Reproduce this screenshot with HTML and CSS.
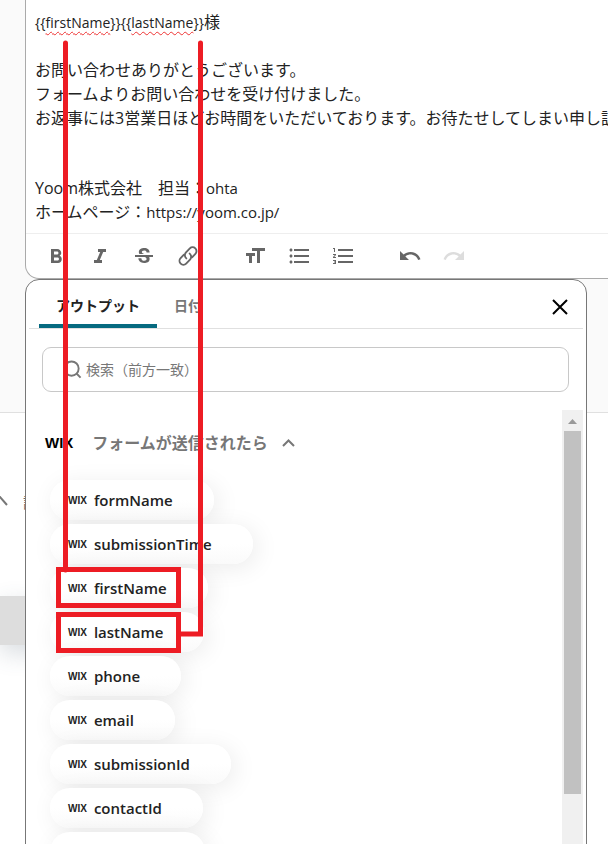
FILE: index.html
```html
<!DOCTYPE html>
<html lang="ja">
<head>
    <meta charset="UTF-8">
    <meta name="viewport" content="width=device-width, initial-scale=1.0">
    <title>メール本文</title>
    <link rel="stylesheet" href="styles.css">
</head>
<body>
    <div class="form-area">
        <div class="editor">
            <div class="editor-text" contenteditable="true" spellcheck="false">
                <p><span class="variable">{{<span class="misspelled">firstName</span>}}{{<span class="misspelled">lastName</span>}}</span>様</p>
                <p>お問い合わせありがとうございます。<br>フォームよりお問い合わせを受け付けました。<br>お返事には3営業日ほどお時間をいただいております。お待たせしてしまい申し訳</p>
                <p class="signature">Yoom株式会社　担当：<span class="latin">ohta</span><br>ホームページ：<span class="latin">https://yoom.co.jp/</span></p>
            </div>
            <div class="toolbar">
                <div class="tool-group">
                    <button type="button" aria-label="太字"><svg viewBox="0 0 24 24"><path d="M15.6 11.79c.97-.67 1.65-1.77 1.65-2.79 0-2.26-1.75-4-4-4H7v14h7.04c2.09 0 3.71-1.7 3.71-3.79 0-1.52-.86-2.82-2.15-3.42zM10 7.5h3c.83 0 1.5.67 1.5 1.5s-.67 1.5-1.5 1.5h-3v-3zm3.5 9H10v-3h3.5c.83 0 1.5.67 1.5 1.5s-.67 1.5-1.5 1.5z"/></svg></button>
                    <button type="button" aria-label="斜体"><svg viewBox="0 0 24 24"><path d="M10 5v3h2.21l-3.42 8H6v3h8v-3h-2.21l3.42-8H18V5z"/></svg></button>
                    <button type="button" aria-label="取り消し線"><svg viewBox="0 -1 24 24"><path d="M6.85 7.08C6.85 4.37 9.45 3 12.24 3c1.64 0 3 .49 3.9 1.28.77.65 1.46 1.73 1.46 3.24h-3.01c0-.31-.05-.59-.15-.85-.29-.86-1.2-1.28-2.25-1.28-1.86 0-2.34 1.02-2.34 1.7 0 .48.25.88.74 1.21.38.25.77.48 1.41.7H7.39c-.21-.34-.54-.89-.54-1.92zM21 12v-2H3v2h9.62c1.15.45 1.96.75 1.96 1.97 0 1-.81 1.67-2.28 1.67-1.54 0-2.93-.54-2.93-2.51H6.4c0 .55.08 1.13.24 1.58.81 2.29 3.29 3.3 5.67 3.3 2.27 0 5.3-.89 5.3-4.05 0-.3-.01-1.16-.48-1.94H21V12z"/></svg></button>
                    <button type="button" aria-label="リンク"><svg class="stroked" viewBox="-1 -1 26 26"><path d="M10.2 14.6a4.4 4.4 0 0 1-.6-6.2l4.4-4.6a4.2 4.2 0 0 1 6 5.9l-3.6 3.8"/><path d="M13.8 9.4a4.4 4.4 0 0 1 .6 6.2L10 20.2a4.2 4.2 0 0 1-6-5.9l3.6-3.8"/></svg></button>
                </div>
                <div class="tool-group">
                    <button type="button" aria-label="文字サイズ"><svg viewBox="0 0 24 24"><path d="M9 4v3h5v12h3V7h5V4H9zm-6 8h3v7h3v-7h3V9H3v3z"/></svg></button>
                    <button type="button" aria-label="箇条書き"><svg viewBox="0 0 24 24"><path d="M4 10.5c-.83 0-1.5.67-1.5 1.5s.67 1.5 1.5 1.5 1.5-.67 1.5-1.5-.67-1.5-1.5-1.5zm0-6c-.83 0-1.5.67-1.5 1.5S3.17 7.5 4 7.5 5.5 6.83 5.5 6 4.83 4.5 4 4.5zm0 12c-.83 0-1.5.68-1.5 1.5s.68 1.5 1.5 1.5 1.5-.68 1.5-1.5-.67-1.5-1.5-1.5zM7 19h15v-2H7v2zm0-6h15v-2H7v2zm0-8v2h15V5H7z"/></svg></button>
                    <button type="button" aria-label="番号付きリスト"><svg viewBox="0 0 24 24"><path d="M2 17h2v.5H3v1h1v.5H2v1h3v-4H2v1zm1-9h1V4H2v1h1v3zm-1 3h1.8L2 13.1v.9h3v-1H3.2L5 10.9V10H2v1zm5-6v2h15V5H7zm0 14h15v-2H7v2zm0-6h15v-2H7v2z"/></svg></button>
                </div>
                <div class="tool-group">
                    <button type="button" aria-label="元に戻す"><svg viewBox="0 0 24 24"><path d="M12.5 8c-2.65 0-5.05.99-6.9 2.6L2 7v9h9l-3.62-3.62c1.39-1.16 3.16-1.88 5.12-1.88 3.54 0 6.55 2.31 7.6 5.5l2.37-.78C21.08 11.03 17.15 8 12.5 8z"/></svg></button>
                    <button type="button" aria-label="やり直す" disabled><svg viewBox="0 0 24 24"><path d="M18.4 10.6C16.55 8.99 14.15 8 11.5 8c-4.65 0-8.58 3.03-9.96 7.22L3.9 16c1.05-3.19 4.05-5.5 7.6-5.5 1.95 0 3.73.72 5.12 1.88L13 16h9V7l-3.6 3.6z"/></svg></button>
                </div>
            </div>
        </div>

        <!-- Output picker -->
        <div class="picker">
            <div class="picker-head">
                <div class="tabs">
                    <button type="button" class="tab active">アウトプット</button>
                    <button type="button" class="tab">日付</button>
                </div>
                <button type="button" class="close" aria-label="閉じる"><svg viewBox="0 0 16 16"><path d="M1 1l14 14M15 1L1 15"/></svg></button>
            </div>
            <label class="search">
                <svg viewBox="0 0 20 20"><circle cx="9" cy="9" r="7.5"/><path d="M14.2 14.2l4.3 4.3"/></svg>
                <input type="text" placeholder="検索（前方一致）" aria-label="検索">
            </label>
            <div class="outputs">
                <div class="outputs-body">
                    <button type="button" class="source">
                        <span class="wix">WIX</span>
                        <span class="source-name">フォームが送信されたら</span>
                        <svg viewBox="0 0 13 9"><path d="M1 8l5.5-5.500L12 8"/></svg>
                    </button>
                    <div class="chips">
                        <button type="button" class="chip"><span class="wix">WIX</span>formName</button>
                        <button type="button" class="chip"><span class="wix">WIX</span>submissionTime</button>
                        <button type="button" class="chip"><span class="wix">WIX</span>firstName</button>
                        <button type="button" class="chip"><span class="wix">WIX</span>lastName</button>
                        <button type="button" class="chip"><span class="wix">WIX</span>phone</button>
                        <button type="button" class="chip"><span class="wix">WIX</span>email</button>
                        <button type="button" class="chip"><span class="wix">WIX</span>submissionId</button>
                        <button type="button" class="chip"><span class="wix">WIX</span>contactId</button>
                        <button type="button" class="chip" aria-label="次の項目"></button>
                    </div>
                </div>
                <div class="scrollbar">
                    <svg viewBox="0 0 17 21"><path d="M4 14l4.5-5 4.5 5z"/></svg>
                    <div class="thumb"></div>
                </div>
            </div>
        </div>
    </div>

    <div class="below">
        <div class="details">
            <svg viewBox="0 0 14 10"><path d="M1 1l5 0 7 8"/></svg>
            <span>詳細</span>
        </div>
        <button type="button" class="next" aria-label="次へ"></button>
    </div>

    <!-- Red marks that tie the variables to their chips -->
    <svg class="marks" width="220" height="660">
        <path d="M65.5 43V570M200.5 43V634H180" stroke-linecap="round"/>
        <rect x="58.5" y="569.5" width="120" height="36"/>
        <rect x="58.5" y="614.5" width="120" height="36"/>
    </svg>

    <script>
        const tabs = document.querySelectorAll('.tab');
        tabs.forEach((tab) => {
            tab.addEventListener('click', () => {
                tabs.forEach((t) => t.classList.remove('active'));
                tab.classList.add('active');
            });
        });
    </script>
</body>
</html>
```
FILE: styles.css
```css
* {
    box-sizing: border-box;
}

body {
    margin: 0;
    position: relative;
    height: 100vh;
    overflow: hidden;
    display: flex;
    flex-direction: column;
    background-color: #fff;
    font-family: "Open Sans", "Noto Sans CJK JP", sans-serif;
    font-size: 15px;
    color: #222;
}

button {
    padding: 0;
    border: none;
    background: none;
    font: inherit;
    color: inherit;
    cursor: pointer;
}

svg {
    display: block;
    flex: none;
}

.form-area {
    position: relative;
    padding: 0 0 133px 25px;
    background-color: #fafafa;
    border-bottom: 1px solid #e0e0e0;
}

.editor {
    overflow: hidden;
    background-color: #fff;
    border: 1px solid #aaa;
    border-width: 0 0 1px 1px;
    border-bottom-left-radius: 14px;
}

.editor-text {
    padding: 10px 0 9px 9px;
    font-size: 16px;
    line-height: 24px;
    white-space: nowrap;
    outline: none;
}

.editor-text p {
    margin: 0 0 23px;
}

.editor-text .signature {
    margin: 46px 0 0;
}

.variable {
    font-size: 14px;
}

.latin {
    font-size: 15px;
}

.misspelled {
    text-decoration: underline wavy #e33 1px;
    text-underline-offset: 3px;
}

.toolbar {
    display: flex;
    gap: 43px;
    padding: 10px 18px;
    border-top: 1px solid #eee;
}

.tool-group {
    display: flex;
    gap: 20px;
}

.toolbar svg {
    width: 24px;
    height: 24px;
    fill: #666;
}

.toolbar .stroked {
    fill: none;
    stroke: #666;
    stroke-width: 2;
    stroke-linecap: round;
}

.toolbar button:disabled svg {
    fill: #ddd;
}

.picker {
    position: absolute;
    z-index: 10;
    top: 279px;
    left: 25px;
    right: 21px;
    height: calc(100vh - 265px);
    display: flex;
    flex-direction: column;
    overflow: hidden;
    padding: 0 3px;
    background-color: #fff;
    border: 1px solid #777;
    border-radius: 14px;
}

.picker-head {
    display: flex;
    justify-content: space-between;
    padding: 0 15px 0 10px;
    border-bottom: 1px solid #e0e0e0;
}

.tabs {
    display: flex;
}

.tab {
    height: 48px;
    padding: 5px 17px 0;
    border-bottom: 4px solid transparent;
    border-radius: 3px 3px 0 0;
    font-size: 14px;
    font-weight: 600;
    color: #777;
}

.tab.active {
    color: #222;
    border-bottom-color: #066a80;
}

.close {
    padding-top: 6px;
}

.close svg {
    width: 16px;
    height: 16px;
    stroke: #000;
    stroke-width: 2;
}

.search {
    display: flex;
    align-items: center;
    gap: 4px;
    height: 45px;
    margin: 18px 14px 0 13px;
    padding: 0 20px;
    border: 1px solid #c8c8c8;
    border-radius: 9px;
}

.search svg {
    width: 19px;
    height: 19px;
    fill: none;
    stroke: #777;
    stroke-width: 2;
}

.search input {
    flex: 1;
    min-width: 0;
    padding: 0;
    border: none;
    outline: none;
    background: none;
    font-family: inherit;
    font-size: 14px;
}

.search input::placeholder {
    color: #777;
}

.outputs {
    flex: 1;
    min-height: 0;
    display: flex;
    justify-content: space-between;
    margin-top: 18px;
}

.outputs-body {
    padding: 19px 16px 0;
}

.source {
    display: flex;
    align-items: center;
    height: 26px;
    gap: 14px;
    font-size: 16px;
    font-weight: 700;
    color: #777;
}

.source svg {
    width: 13px;
    height: 9px;
    fill: none;
    stroke: #777;
    stroke-width: 2;
}

.source-name {
    padding-left: 5px;
}

.wix {
    font-family: "Liberation Sans", sans-serif;
    font-size: 10px;
    font-weight: 700;
    color: #222;
}

.source .wix {
    font-size: 15px;
    color: #000;
}

.chips {
    display: flex;
    flex-direction: column;
    align-items: flex-start;
    gap: 4px;
    padding: 25px 0 0 5px;
}

.chip {
    display: flex;
    flex: none;
    align-items: center;
    gap: 7px;
    min-width: 125px;
    height: 40px;
    padding: 0 41px 0 18px;
    border-radius: 20px;
    background: linear-gradient(#fff 50%, #fafafa);
    box-shadow: 4px 4px 24px rgba(0, 0, 0, 0.08);
    font-weight: 600;
}

.chip:last-child {
    min-width: 155px;
}

.scrollbar {
    width: 21px;
    padding: 0 2px;
    background-color: #f0f0f0;
}

.scrollbar svg {
    width: 17px;
    height: 21px;
    fill: #999;
}

.thumb {
    height: 363px;
    background-color: #c1c1c1;
}

.below {
    padding-top: 76px;
}

.details {
    display: flex;
    align-items: center;
    gap: 15px;
    height: 24px;
    margin-left: -6px;
    color: #666;
}

.details svg {
    width: 14px;
    height: 10px;
    fill: none;
    stroke: #777;
    stroke-width: 2;
}

.next {
    display: block;
    width: 100px;
    height: 49px;
    margin-top: 83px;
    background-color: #ddd;
    box-shadow: 0 8px 24px rgba(60, 80, 100, 0.2);
}

.marks {
    position: absolute;
    z-index: 20;
    top: 0;
    left: 0;
    fill: none;
    stroke: #ed1c24;
    stroke-width: 5;
    pointer-events: none;
}
```
